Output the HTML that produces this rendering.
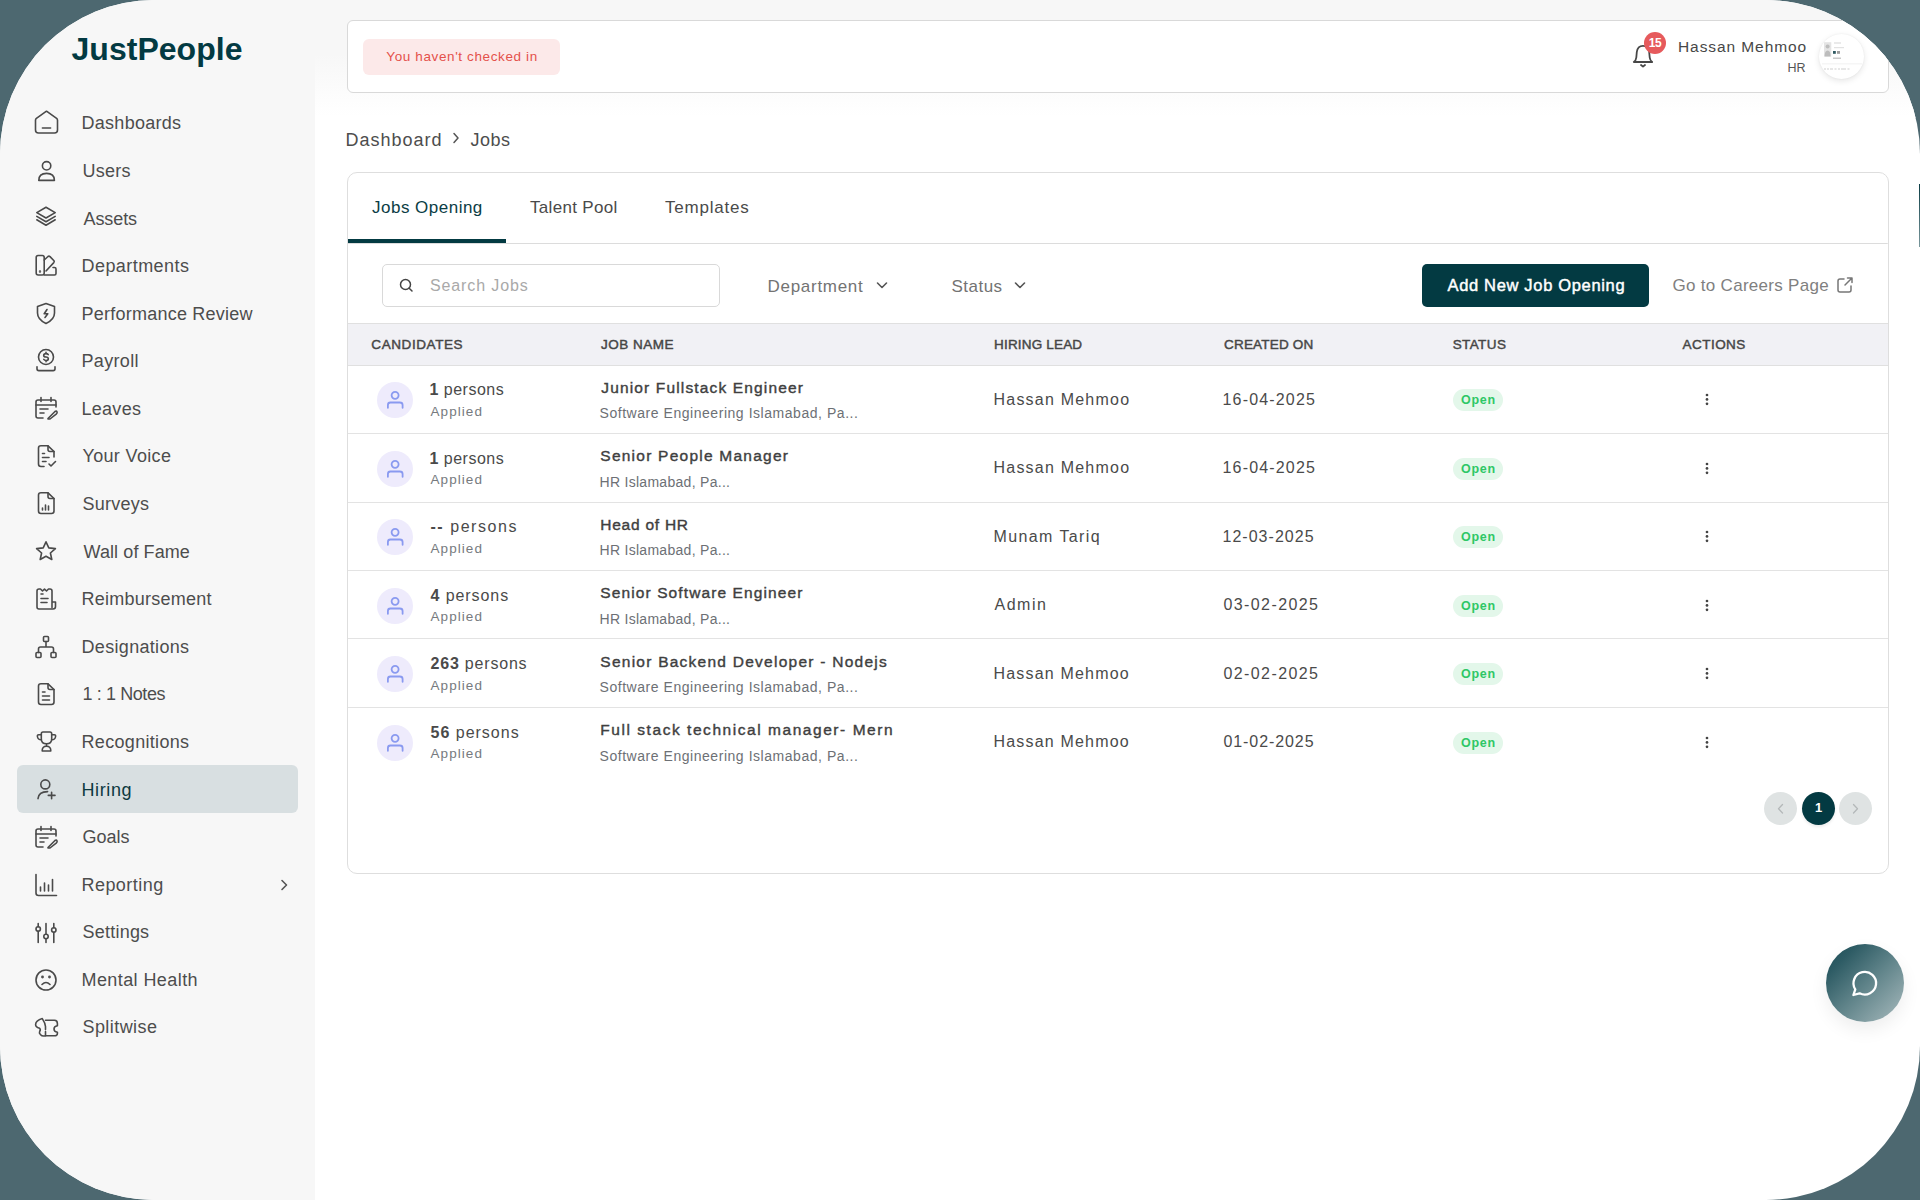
<!DOCTYPE html>
<html><head><meta charset="utf-8">
<style>
*{box-sizing:border-box;margin:0;padding:0}
html,body{width:1920px;height:1200px;overflow:hidden;background:#4d6870;font-family:"Liberation Sans",sans-serif}
#frame{position:absolute;left:0;top:0;width:1920px;height:1200px;border-radius:154px;overflow:hidden;background:#fff}
#frame div,#frame svg{position:absolute}
#side{left:0;top:0;width:315px;height:1200px;background:#f7f7f7}
.logo{left:71px;top:28px;font-size:33px;font-weight:bold;color:#033a42;letter-spacing:-0.3px;white-space:nowrap}
.ni{left:33px;width:26px;height:26px}
.nt{left:82px;font-size:18px;white-space:nowrap;line-height:22px}
.actbg{left:17px;top:765px;width:281px;height:48px;background:#d8dfe1;border-radius:6px}
#top{left:315px;top:0;width:1605px;height:118px;background:linear-gradient(#f7f7f7 0,#f7f7f7 54px,#fff 116px)}
.hcard{left:347px;top:20px;width:1542px;height:73px;background:#fff;border:1px solid #d9d9d9;border-radius:6px}
.pill{left:363px;top:39px;width:197px;height:36px;background:#fce9e9;border-radius:6px;color:#e4514b;font-size:14px;text-align:center;line-height:36px;white-space:nowrap}
.uname{left:1600px;width:206px;top:36px;font-size:16px;color:#444;text-align:right;white-space:nowrap}
.urole{left:1700px;width:106px;top:59px;font-size:14px;color:#555;text-align:right}
.badge{left:1644px;top:32px;width:22px;height:22px;border-radius:50%;background:#e65a5c;color:#fff;font-size:12px;font-weight:bold;text-align:center;line-height:22px;letter-spacing:-0.3px}
.avatar{left:1819px;top:34px;width:45px;height:45px;border-radius:50%;background:#fff;box-shadow:0 2px 6px rgba(0,0,0,0.10),0 0 2px rgba(0,0,0,0.06);overflow:hidden}
.crumb{top:128px;font-size:18px;color:#4a4a4a;white-space:nowrap}
.card{left:347px;top:172px;width:1542px;height:702px;border:1px solid #dedede;border-radius:10px;background:#fff}
.tab{top:196px;font-size:17px;color:#4a4a4a;white-space:nowrap}
.tabline{left:348px;top:239px;width:158px;height:4px;background:#033a42}
.tabsep{left:348px;top:243px;width:1540px;height:1px;background:#dcdcdc;border-radius:0 0 3px 0}
.search{left:382px;top:264px;width:338px;height:43px;border:1px solid #d9d9d9;border-radius:5px}
.ph{left:430px;top:275px;font-size:16px;color:#a8a8a8;white-space:nowrap}
.dd{top:276px;font-size:17px;color:#6a6a6a;white-space:nowrap}
.btn{left:1422px;top:264px;width:227px;height:43px;background:#033a42;border-radius:5px;color:#fff;font-size:16.5px;font-weight:bold;text-align:center;line-height:43px;white-space:nowrap}
.careers{left:1673px;top:275px;font-size:17px;color:#7d7d7d;white-space:nowrap}
.thead{left:348px;top:323px;width:1540px;height:43px;background:#f1f1f5;border-top:1px solid #e0e0e0;border-bottom:1px solid #e0e0e0}
.th{top:337px;font-size:13px;font-weight:bold;color:#454545;letter-spacing:0.9px;white-space:nowrap}
.rl{left:348px;width:1540px;height:1px;background:#e3e3e3}
.av{left:377px;width:36px;height:36px;border-radius:50%;background:#eeebfc}
.av svg{left:8px;top:8px;width:20px;height:20px}
.pc{left:430px;font-size:16px;color:#4a4a4a;white-space:nowrap}
.pc b{color:#333}
.ap{left:430px;font-size:14px;color:#777;white-space:nowrap}
.jn{left:600px;font-size:16px;font-weight:bold;color:#3a3a3a;white-space:nowrap}
.js{left:600px;font-size:13px;color:#6a6a6a;white-space:nowrap}
.hl{left:994px;font-size:16px;color:#4a4a4a;white-space:nowrap}
.dt{left:1223px;font-size:16px;color:#4a4a4a;white-space:nowrap}
.open{left:1453px;width:50px;height:22px;border-radius:11px;background:#e3f7ea;color:#2db55d;font-size:12.5px;font-weight:bold;text-align:center;line-height:22px}
.dots{left:1703.5px}
.pg{top:792px;width:33px;height:33px;border-radius:50%;text-align:center;line-height:32px;font-size:14px}
.chat{left:1826px;top:944px;width:78px;height:78px;border-radius:50%;background:linear-gradient(135deg,#1d4f58 0%,#2d5b64 20%,#5f8389 52%,#a9bbbe 100%);box-shadow:0 8px 18px rgba(0,0,0,0.07)}
.edge{left:1919px;top:184px;width:1px;height:63px;background:linear-gradient(#0b3d45,#7a979c)}
.tx{white-space:nowrap}
.tx b{font-weight:bold}
</style></head><body>
<div id="frame">
<div id="side">
  <div class="actbg"></div>
<svg class="ni" style="top:109.0px" viewBox="0 0 26 26" fill="none" stroke="#4a4a4a" stroke-width="1.6" stroke-linecap="round" stroke-linejoin="round"><path d="M13.5 2.2 L23.6 9.4 Q24.5 10.1 24.5 11.3 V21 A3 3 0 0 1 21.5 24 H5.5 A3 3 0 0 1 2.5 21 V11.3 Q2.5 10.1 3.4 9.4 Z"/><path d="M9.4 19 H17.6"/></svg>
<svg class="ni" style="top:156.7px" viewBox="0 0 26 26" fill="none" stroke="#4a4a4a" stroke-width="1.6" stroke-linecap="round" stroke-linejoin="round"><circle cx="13.6" cy="8.8" r="4.2"/><path d="M5.8 23.4 Q5.8 16.4 13.6 16.4 Q21.4 16.4 21.4 23.4 Z"/></svg>
<svg class="ni" style="top:204.4px" viewBox="0 0 26 26" fill="none" stroke="#4a4a4a" stroke-width="1.6" stroke-linecap="round" stroke-linejoin="round"><path d="M13 3.2 L22.2 8.6 L13 14 L3.8 8.6 Z"/><path d="M3.8 12.4 L13 17.8 L22.2 12.4"/><path d="M3.8 15.8 L13 21.2 L22.2 15.8"/></svg>
<svg class="ni" style="top:252.0px" viewBox="0 0 26 26" fill="none" stroke="#4a4a4a" stroke-width="1.6" stroke-linecap="round" stroke-linejoin="round"><rect x="3.2" y="3.5" width="8" height="19.5" rx="2"/><path d="M11.2 8 L15 4.5 Q16 3.8 17 4.6 L21 8.8 Q21.6 9.6 20.8 10.6 L13 19"/><path d="M11.2 23 H21.5 Q23 23 23 21.5 V17 Q23 15.5 21.5 15.5 L20 15.5"/><circle cx="7" cy="19.5" r="0.4" fill="#4a4a4a"/></svg>
<svg class="ni" style="top:299.7px" viewBox="0 0 26 26" fill="none" stroke="#4a4a4a" stroke-width="1.6" stroke-linecap="round" stroke-linejoin="round"><path d="M13 3.5 L21.5 6.5 V13 Q21.5 19.5 13 23.5 Q4.5 19.5 4.5 13 V6.5 Z"/><path d="M14 9.5 L11.2 13.8 H14.8 L12 17.5"/></svg>
<svg class="ni" style="top:347.4px" viewBox="0 0 26 26" fill="none" stroke="#4a4a4a" stroke-width="1.6" stroke-linecap="round" stroke-linejoin="round"><circle cx="13" cy="10" r="7.5"/><path d="M15.2 7.6 Q14.4 6.6 13 6.6 Q10.7 6.6 10.7 8.5 Q10.7 10 13 10 Q15.3 10 15.3 11.7 Q15.3 13.5 13 13.5 Q11.5 13.5 10.8 12.4 M13 5.3 V6.6 M13 13.5 V14.8"/><path d="M4 19.8 V21.8 Q4 23.6 5.8 23.6 H20.2 Q22 23.6 22 21.8 V19.8"/></svg>
<svg class="ni" style="top:395.1px" viewBox="0 0 26 26" fill="none" stroke="#4a4a4a" stroke-width="1.6" stroke-linecap="round" stroke-linejoin="round"><path d="M23 12 V7 Q23 5 21 5 H5 Q3 5 3 7 V21 Q3 23 5 23 H10"/><path d="M8 2.5 V6.5 M18 2.5 V6.5 M3 10 H23 M7 14 H15 M7 18 H11"/><path d="M15 23.5 L22 16.5 Q23.3 15.6 24 16.8 Q24.5 17.8 23.5 18.8 L17 24 H15 Z"/></svg>
<svg class="ni" style="top:442.8px" viewBox="0 0 26 26" fill="none" stroke="#4a4a4a" stroke-width="1.6" stroke-linecap="round" stroke-linejoin="round"><path d="M11 23.5 H8 Q5.5 23.5 5.5 21 V5 Q5.5 2.8 8 2.8 H15 L21 8.5 V14"/><path d="M15 2.8 V6.5 Q15 8.5 17 8.5 H21"/><path d="M9.5 10.5 H11.5 M9.5 14.5 H16 M9.5 18.5 H13"/><path d="M16 21 L18 23 L22.5 18.5"/></svg>
<svg class="ni" style="top:490.4px" viewBox="0 0 26 26" fill="none" stroke="#4a4a4a" stroke-width="1.6" stroke-linecap="round" stroke-linejoin="round"><path d="M15 2.8 H8 Q5.5 2.8 5.5 5 V21 Q5.5 23.5 8 23.5 H18.5 Q21 23.5 21 21 V8.5 Z"/><path d="M15 2.8 V6.5 Q15 8.5 17 8.5 H21"/><path d="M9.5 20 V18 M12.5 20 V15 M15.5 20 V16"/></svg>
<svg class="ni" style="top:538.1px" viewBox="0 0 26 26" fill="none" stroke="#4a4a4a" stroke-width="1.6" stroke-linecap="round" stroke-linejoin="round"><path d="M13 3.8 L15.8 9.9 L22.4 10.6 L17.4 15 L18.8 21.5 L13 18.2 L7.2 21.5 L8.6 15 L3.6 10.6 L10.2 9.9 Z"/></svg>
<svg class="ni" style="top:585.8px" viewBox="0 0 26 26" fill="none" stroke="#4a4a4a" stroke-width="1.6" stroke-linecap="round" stroke-linejoin="round"><path d="M19 21.5 V5 Q19 3 17 3 L15.5 3 L13.5 5 L11.5 3 L9.5 5 L7.5 3 H6 Q4 3 4 5 V21 Q4 23 6 23 H20 Q22.5 23 22.5 20.5 V16 H19"/><path d="M8 8 H10 M8 12.5 H15 M8 16.5 H14"/></svg>
<svg class="ni" style="top:633.5px" viewBox="0 0 26 26" fill="none" stroke="#4a4a4a" stroke-width="1.6" stroke-linecap="round" stroke-linejoin="round"><rect x="10.5" y="2.5" width="5" height="5" rx="1"/><rect x="3" y="18.5" width="5" height="5" rx="1"/><rect x="18" y="18.5" width="5" height="5" rx="1"/><path d="M13 7.5 V13 M5.5 18.5 V15 Q5.5 13 7.5 13 H18.5 Q20.5 13 20.5 15 V18.5"/></svg>
<svg class="ni" style="top:681.2px" viewBox="0 0 26 26" fill="none" stroke="#4a4a4a" stroke-width="1.6" stroke-linecap="round" stroke-linejoin="round"><path d="M15 2.8 H8 Q5.5 2.8 5.5 5 V21 Q5.5 23.5 8 23.5 H18.5 Q21 23.5 21 21 V8.5 Z"/><path d="M15 2.8 V6.5 Q15 8.5 17 8.5 H21"/><path d="M9.5 11 H12 M9.5 15 H16.5 M9.5 19 H16.5"/></svg>
<svg class="ni" style="top:728.8px" viewBox="0 0 26 26" fill="none" stroke="#4a4a4a" stroke-width="1.6" stroke-linecap="round" stroke-linejoin="round"><path d="M10 3 H17 Q18.7 3 18.7 4.7 V10 Q18.7 14.8 13.5 14.8 Q8.3 14.8 8.3 10 V4.7 Q8.3 3 10 3 Z"/><path d="M8.3 5.8 H5.6 Q4.2 5.8 4.4 7.5 Q4.9 10.8 8.3 10.8 M18.7 5.8 H21.4 Q22.8 5.8 22.6 7.5 Q22.1 10.8 18.7 10.8"/><path d="M13.5 14.8 V17.3"/><path d="M9.2 22 Q9 17.3 13.5 17.3 Q18 17.3 17.8 22 Z"/></svg>
<svg class="ni" style="top:776.5px" viewBox="0 0 26 26" fill="none" stroke="#4a4a4a" stroke-width="1.6" stroke-linecap="round" stroke-linejoin="round"><circle cx="12.3" cy="7.4" r="4.5"/><path d="M5 21.6 Q5.6 14.7 14.6 14.6"/><path d="M18.6 15.2 V21.7 M15.3 18.4 H22"/></svg>
<svg class="ni" style="top:824.2px" viewBox="0 0 26 26" fill="none" stroke="#4a4a4a" stroke-width="1.6" stroke-linecap="round" stroke-linejoin="round"><path d="M23 12 V7 Q23 5 21 5 H5 Q3 5 3 7 V21 Q3 23 5 23 H10"/><path d="M8 2.5 V6.5 M18 2.5 V6.5 M3 10 H23 M7 14 H15 M7 18 H11"/><path d="M15 23.5 L22 16.5 Q23.3 15.6 24 16.8 Q24.5 17.8 23.5 18.8 L17 24 H15 Z"/></svg>
<svg class="ni" style="top:871.9px" viewBox="0 0 26 26" fill="none" stroke="#4a4a4a" stroke-width="1.6" stroke-linecap="round" stroke-linejoin="round"><path d="M3 2.5 V21 Q3 23.5 5.5 23.5 H23.5"/><path d="M7.5 19 V15 M11.5 19 V11 M15.5 19 V13 M19.5 19 V7.5"/></svg>
<svg class="ni" style="top:919.6px" viewBox="0 0 26 26" fill="none" stroke="#4a4a4a" stroke-width="1.6" stroke-linecap="round" stroke-linejoin="round"><circle cx="5.2" cy="9" r="2.2"/><circle cx="13" cy="16.5" r="2.2"/><circle cx="20.8" cy="10" r="2.2"/><path d="M5.2 3.5 V6.8 M5.2 11.2 V22.5 M13 3.5 V14.3 M13 18.7 V22.5 M20.8 3.5 V7.8 M20.8 12.2 V22.5"/></svg>
<svg class="ni" style="top:967.2px" viewBox="0 0 26 26" fill="none" stroke="#4a4a4a" stroke-width="1.6" stroke-linecap="round" stroke-linejoin="round"><circle cx="13" cy="13" r="10"/><path d="M9 17.5 Q13 13.5 17 17.5"/><circle cx="9.5" cy="10" r="0.6" fill="#4a4a4a"/><circle cx="16.5" cy="10" r="0.6" fill="#4a4a4a"/></svg>
<svg class="ni" style="top:1014.9px" viewBox="0 0 26 26" fill="none" stroke="#4a4a4a" stroke-width="1.6" stroke-linecap="round" stroke-linejoin="round"><path d="M12.5 5.2 H21.5 Q24.4 5.2 24.4 8.5 V10.8 Q21 11.3 21 14 Q21 16.8 24.4 17.3 V18.5 Q24.4 20.8 21.5 20.8 H12.5"/><path d="M12.5 20.8 Q9.2 21.6 7.6 19.8 Q5.8 17.8 6.6 16.6 Q8 14.8 6.6 13.3 Q2.5 12 2.6 9.5 Q2.8 5.5 9.3 3.6 Q12.2 8 12.5 11.5 V14.6 M12.5 16.6 V20.8"/></svg>
<svg style="position:absolute;left:278px;top:878px" width="12" height="14" viewBox="0 0 12 14" fill="none" stroke="#555" stroke-width="1.6" stroke-linecap="round" stroke-linejoin="round"><path d="M4 2.5 L8.5 7 L4 11.5"/></svg>
</div>
<div id="top"></div>
<div class="hcard"></div>
<div class="pill"></div>
<svg style="left:1630px;top:42px" width="26" height="28" viewBox="0 0 26 28" fill="none" stroke="#474747" stroke-width="1.8" stroke-linecap="round" stroke-linejoin="round"><path d="M13 3.8 Q7.6 3.8 6.8 10 L6.3 15.5 Q6 18.5 3.8 20 H22.2 Q20 18.5 19.7 15.5 L19.2 10 Q18.4 3.8 13 3.8 Z"/><path d="M11 23 L13 24.6 L15 23"/></svg>
<div class="badge">15</div>
<div class="avatar"><svg style="left:0;top:0" width="45" height="45" viewBox="0 0 45 45">
<rect x="5" y="8.2" width="7.3" height="14.3" fill="#e4e4e4"/><circle cx="8.6" cy="12.5" r="2" fill="#bdbdbd"/><path d="M5.6 22.5 Q5.6 16.5 8.6 16.5 Q11.6 16.5 11.6 22.5 Z" fill="#bdbdbd"/>
<rect x="14" y="17" width="2.8" height="2.8" fill="#2f5a61"/><rect x="18" y="17" width="3" height="2.8" fill="#9c9c9c"/>
<rect x="15" y="8.5" width="7" height="1" fill="#d5d5d5"/><rect x="15" y="13" width="10" height="1.2" fill="#e2e2e2"/><rect x="14" y="23.5" width="8" height="1.5" fill="#c9c9c9"/>
<rect x="3" y="29.5" width="40" height="0.8" fill="#eeeeee"/>
<path d="M5 35 h2 M8 35 h2 M11 35 h3 M15.5 35 h2 M19 35 h2 M22 35 h5 M28.5 35 h2" stroke="#cfcfcf" stroke-width="1"/>
</svg></div>
<svg style="left:450px;top:131px" width="12" height="14" viewBox="0 0 12 14" fill="none" stroke="#555" stroke-width="1.5" stroke-linecap="round" stroke-linejoin="round"><path d="M4 2.5 L8 7 L4 11.5"/></svg>
<div class="card"></div>
<div class="tabsep"></div>
<div class="tabline"></div>
<div class="search"></div>
<svg style="left:398px;top:277px" width="16" height="16" viewBox="0 0 16 16" fill="none" stroke="#444" stroke-width="1.5" stroke-linecap="round"><circle cx="7.5" cy="7.5" r="5"/><path d="M11.2 11.2 L14 14"/></svg>
<svg style="left:875px;top:278px" width="14" height="14" viewBox="0 0 14 14" fill="none" stroke="#555" stroke-width="1.6" stroke-linecap="round" stroke-linejoin="round"><path d="M2.5 5 L7 9.5 L11.5 5"/></svg>
<svg style="left:1013px;top:278px" width="14" height="14" viewBox="0 0 14 14" fill="none" stroke="#555" stroke-width="1.6" stroke-linecap="round" stroke-linejoin="round"><path d="M2.5 5 L7 9.5 L11.5 5"/></svg>
<div class="btn"></div>
<svg style="left:1835px;top:275px" width="20" height="20" viewBox="0 0 20 20" fill="none" stroke="#777" stroke-width="1.5" stroke-linecap="round" stroke-linejoin="round"><path d="M9 4 H5 Q3 4 3 6 V15 Q3 17 5 17 H14 Q16 17 16 15 V11"/><path d="M10 10 L17 3 M12.5 3 H17 V7.5"/></svg>
<div class="thead"></div>
<div class="rl" style="top:433px"></div>
<div class="av" style="top:382.0px"><svg viewBox="0 0 20 20" fill="none" stroke="#8a9af0" stroke-width="1.8" stroke-linecap="round" stroke-linejoin="round"><circle cx="10.1" cy="5.3" r="3.5"/><path d="M2.9 17.8 V15 Q2.9 12.5 5.4 12.5 H14.9 Q17.6 12.5 17.6 15 V17.8"/></svg></div>
<div class="open" style="top:389.0px"></div>
<svg class="dots" style="top:392.0px" width="6" height="16" viewBox="0 0 6 16" fill="#444"><circle cx="3" cy="3" r="1.35"/><circle cx="3" cy="7.4" r="1.35"/><circle cx="3" cy="11.8" r="1.35"/></svg>
<div class="rl" style="top:502px"></div>
<div class="av" style="top:450.5px"><svg viewBox="0 0 20 20" fill="none" stroke="#8a9af0" stroke-width="1.8" stroke-linecap="round" stroke-linejoin="round"><circle cx="10.1" cy="5.3" r="3.5"/><path d="M2.9 17.8 V15 Q2.9 12.5 5.4 12.5 H14.9 Q17.6 12.5 17.6 15 V17.8"/></svg></div>
<div class="open" style="top:457.5px"></div>
<svg class="dots" style="top:460.5px" width="6" height="16" viewBox="0 0 6 16" fill="#444"><circle cx="3" cy="3" r="1.35"/><circle cx="3" cy="7.4" r="1.35"/><circle cx="3" cy="11.8" r="1.35"/></svg>
<div class="rl" style="top:570px"></div>
<div class="av" style="top:519.0px"><svg viewBox="0 0 20 20" fill="none" stroke="#8a9af0" stroke-width="1.8" stroke-linecap="round" stroke-linejoin="round"><circle cx="10.1" cy="5.3" r="3.5"/><path d="M2.9 17.8 V15 Q2.9 12.5 5.4 12.5 H14.9 Q17.6 12.5 17.6 15 V17.8"/></svg></div>
<div class="open" style="top:526.0px"></div>
<svg class="dots" style="top:529.0px" width="6" height="16" viewBox="0 0 6 16" fill="#444"><circle cx="3" cy="3" r="1.35"/><circle cx="3" cy="7.4" r="1.35"/><circle cx="3" cy="11.8" r="1.35"/></svg>
<div class="rl" style="top:638px"></div>
<div class="av" style="top:587.5px"><svg viewBox="0 0 20 20" fill="none" stroke="#8a9af0" stroke-width="1.8" stroke-linecap="round" stroke-linejoin="round"><circle cx="10.1" cy="5.3" r="3.5"/><path d="M2.9 17.8 V15 Q2.9 12.5 5.4 12.5 H14.9 Q17.6 12.5 17.6 15 V17.8"/></svg></div>
<div class="open" style="top:594.5px"></div>
<svg class="dots" style="top:597.5px" width="6" height="16" viewBox="0 0 6 16" fill="#444"><circle cx="3" cy="3" r="1.35"/><circle cx="3" cy="7.4" r="1.35"/><circle cx="3" cy="11.8" r="1.35"/></svg>
<div class="rl" style="top:707px"></div>
<div class="av" style="top:656.0px"><svg viewBox="0 0 20 20" fill="none" stroke="#8a9af0" stroke-width="1.8" stroke-linecap="round" stroke-linejoin="round"><circle cx="10.1" cy="5.3" r="3.5"/><path d="M2.9 17.8 V15 Q2.9 12.5 5.4 12.5 H14.9 Q17.6 12.5 17.6 15 V17.8"/></svg></div>
<div class="open" style="top:663.0px"></div>
<svg class="dots" style="top:666.0px" width="6" height="16" viewBox="0 0 6 16" fill="#444"><circle cx="3" cy="3" r="1.35"/><circle cx="3" cy="7.4" r="1.35"/><circle cx="3" cy="11.8" r="1.35"/></svg>

<div class="av" style="top:724.5px"><svg viewBox="0 0 20 20" fill="none" stroke="#8a9af0" stroke-width="1.8" stroke-linecap="round" stroke-linejoin="round"><circle cx="10.1" cy="5.3" r="3.5"/><path d="M2.9 17.8 V15 Q2.9 12.5 5.4 12.5 H14.9 Q17.6 12.5 17.6 15 V17.8"/></svg></div>
<div class="open" style="top:731.5px"></div>
<svg class="dots" style="top:734.5px" width="6" height="16" viewBox="0 0 6 16" fill="#444"><circle cx="3" cy="3" r="1.35"/><circle cx="3" cy="7.4" r="1.35"/><circle cx="3" cy="11.8" r="1.35"/></svg>
<div class="pg" style="left:1764px;background:#dfe3e3"><svg style="left:0;top:0" width="33" height="33" viewBox="0 0 33 33" fill="none" stroke="#b4b8b9" stroke-width="1.3" stroke-linecap="round" stroke-linejoin="round"><path d="M18.5 12.5 L14.5 16.8 L18.5 21"/></svg></div>
<div class="pg" style="left:1802px;background:#033a42;color:#fff;font-weight:bold;font-size:13px;line-height:31px;box-shadow:0 2px 3px rgba(0,0,0,0.08)">1</div>
<div class="pg" style="left:1839px;background:#dfe3e3"><svg style="left:0;top:0" width="33" height="33" viewBox="0 0 33 33" fill="none" stroke="#b4b8b9" stroke-width="1.3" stroke-linecap="round" stroke-linejoin="round"><path d="M14.5 12.5 L18.5 16.8 L14.5 21"/></svg></div>
<div class="chat"><svg style="left:24px;top:24px" width="30" height="30" viewBox="0 0 30 30" fill="none" stroke="#fff" stroke-width="2.3" stroke-linecap="round" stroke-linejoin="round"><path d="M3.4 27 L5.3 21.4 A11.3 11.3 0 1 1 9.6 25.3 Z"/></svg></div>
<div class="edge"></div>
<div id="t_nav0" class="tx" style="left:81.50px;top:113.40px;font-size:18px;line-height:20px;letter-spacing:0.284px;color:#4d4d4d;font-weight:normal;">Dashboards</div>
<div id="t_nav1" class="tx" style="left:82.50px;top:160.98px;font-size:18px;line-height:20px;letter-spacing:0.250px;color:#4d4d4d;font-weight:normal;">Users</div>
<div id="t_nav2" class="tx" style="left:83.50px;top:208.56px;font-size:18px;line-height:20px;letter-spacing:-0.080px;color:#4d4d4d;font-weight:normal;">Assets</div>
<div id="t_nav3" class="tx" style="left:81.50px;top:256.14px;font-size:18px;line-height:20px;letter-spacing:0.440px;color:#4d4d4d;font-weight:normal;">Departments</div>
<div id="t_nav4" class="tx" style="left:81.50px;top:303.72px;font-size:18px;line-height:20px;letter-spacing:0.235px;color:#4d4d4d;font-weight:normal;">Performance Review</div>
<div id="t_nav5" class="tx" style="left:81.50px;top:351.30px;font-size:18px;line-height:20px;letter-spacing:0.333px;color:#4d4d4d;font-weight:normal;">Payroll</div>
<div id="t_nav6" class="tx" style="left:81.50px;top:398.88px;font-size:18px;line-height:20px;letter-spacing:0.280px;color:#4d4d4d;font-weight:normal;">Leaves</div>
<div id="t_nav7" class="tx" style="left:82.50px;top:446.46px;font-size:18px;line-height:20px;letter-spacing:0.333px;color:#4d4d4d;font-weight:normal;">Your Voice</div>
<div id="t_nav8" class="tx" style="left:82.50px;top:494.04px;font-size:18px;line-height:20px;letter-spacing:0.231px;color:#4d4d4d;font-weight:normal;">Surveys</div>
<div id="t_nav9" class="tx" style="left:83.50px;top:541.62px;font-size:18px;line-height:20px;letter-spacing:0.091px;color:#4d4d4d;font-weight:normal;">Wall of Fame</div>
<div id="t_nav10" class="tx" style="left:81.50px;top:589.20px;font-size:18px;line-height:20px;letter-spacing:0.250px;color:#4d4d4d;font-weight:normal;">Reimbursement</div>
<div id="t_nav11" class="tx" style="left:81.50px;top:636.78px;font-size:18px;line-height:20px;letter-spacing:0.322px;color:#4d4d4d;font-weight:normal;">Designations</div>
<div id="t_nav12" class="tx" style="left:82.50px;top:684.36px;font-size:18px;line-height:20px;letter-spacing:-0.400px;color:#4d4d4d;font-weight:normal;">1 : 1 Notes</div>
<div id="t_nav13" class="tx" style="left:81.50px;top:731.94px;font-size:18px;line-height:20px;letter-spacing:0.322px;color:#4d4d4d;font-weight:normal;">Recognitions</div>
<div id="t_nav14" class="tx" style="left:81.50px;top:779.52px;font-size:18px;line-height:20px;letter-spacing:0.600px;color:#0d3940;font-weight:normal;">Hiring</div>
<div id="t_nav15" class="tx" style="left:82.50px;top:827.10px;font-size:18px;line-height:20px;letter-spacing:0.000px;color:#4d4d4d;font-weight:normal;">Goals</div>
<div id="t_nav16" class="tx" style="left:81.50px;top:874.68px;font-size:18px;line-height:20px;letter-spacing:0.450px;color:#4d4d4d;font-weight:normal;">Reporting</div>
<div id="t_nav17" class="tx" style="left:82.50px;top:922.26px;font-size:18px;line-height:20px;letter-spacing:0.226px;color:#4d4d4d;font-weight:normal;">Settings</div>
<div id="t_nav18" class="tx" style="left:81.50px;top:969.84px;font-size:18px;line-height:20px;letter-spacing:0.417px;color:#4d4d4d;font-weight:normal;">Mental Health</div>
<div id="t_nav19" class="tx" style="left:82.50px;top:1017.42px;font-size:18px;line-height:20px;letter-spacing:0.425px;color:#4d4d4d;font-weight:normal;">Splitwise</div>
<div id="t_logo" class="tx" style="left:71.50px;top:30.80px;font-size:32px;line-height:36px;letter-spacing:0.025px;color:#033a42;font-weight:bold;">JustPeople</div>
<div id="t_pill" class="tx" style="left:386.25px;top:48.60px;font-size:13.5px;line-height:15px;letter-spacing:0.621px;color:#e4514b;font-weight:normal;">You haven't checked in</div>
<div id="t_uname" class="tx" style="left:1678.00px;top:37.70px;font-size:15.5px;line-height:17px;letter-spacing:0.917px;color:#474747;font-weight:normal;">Hassan Mehmoo</div>
<div id="t_urole" class="tx" style="left:1787.50px;top:60.70px;font-size:12.5px;line-height:14px;letter-spacing:0.000px;color:#555;font-weight:normal;">HR</div>
<div id="t_cr1" class="tx" style="left:345.50px;top:129.60px;font-size:18px;line-height:20px;letter-spacing:1.000px;color:#4d4d4d;font-weight:normal;">Dashboard</div>
<div id="t_cr2" class="tx" style="left:470.50px;top:129.60px;font-size:18px;line-height:20px;letter-spacing:0.531px;color:#4d4d4d;font-weight:normal;">Jobs</div>
<div id="t_tab1" class="tx" style="left:372.00px;top:197.50px;font-size:17px;line-height:19px;letter-spacing:0.490px;color:#0b3d45;font-weight:normal;">Jobs Opening</div>
<div id="t_tab2" class="tx" style="left:530.00px;top:197.50px;font-size:17px;line-height:19px;letter-spacing:0.320px;color:#4a4a4a;font-weight:normal;">Talent Pool</div>
<div id="t_tab3" class="tx" style="left:665.00px;top:197.50px;font-size:17px;line-height:19px;letter-spacing:0.775px;color:#4a4a4a;font-weight:normal;">Templates</div>
<div id="t_ph" class="tx" style="left:430.00px;top:276.70px;font-size:16px;line-height:17px;letter-spacing:0.880px;color:#a9a9a9;font-weight:normal;">Search Jobs</div>
<div id="t_dd1" class="tx" style="left:767.50px;top:276.70px;font-size:17px;line-height:19px;letter-spacing:0.716px;color:#737373;font-weight:normal;">Department</div>
<div id="t_dd2" class="tx" style="left:951.50px;top:276.70px;font-size:17px;line-height:19px;letter-spacing:0.480px;color:#737373;font-weight:normal;">Status</div>
<div id="t_btn" class="tx" style="left:1447.50px;top:275.90px;font-size:16.5px;line-height:18px;letter-spacing:0.667px;color:#ffffff;font-weight:normal;-webkit-text-stroke:0.45px #ffffff">Add New Job Opening</div>
<div id="t_car" class="tx" style="left:1672.50px;top:275.50px;font-size:17px;line-height:19px;letter-spacing:0.294px;color:#808080;font-weight:normal;">Go to Careers Page</div>
<div id="t_th0" class="tx" style="left:371.30px;top:336.90px;font-size:13.5px;line-height:15px;letter-spacing:0.582px;color:#464646;font-weight:normal;-webkit-text-stroke:0.45px #464646">CANDIDATES</div>
<div id="t_th1" class="tx" style="left:600.90px;top:336.90px;font-size:13.5px;line-height:15px;letter-spacing:0.498px;color:#464646;font-weight:normal;-webkit-text-stroke:0.45px #464646">JOB NAME</div>
<div id="t_th2" class="tx" style="left:994.10px;top:336.90px;font-size:13.5px;line-height:15px;letter-spacing:0.170px;color:#464646;font-weight:normal;-webkit-text-stroke:0.45px #464646">HIRING LEAD</div>
<div id="t_th3" class="tx" style="left:1224.00px;top:336.90px;font-size:13.5px;line-height:15px;letter-spacing:0.190px;color:#464646;font-weight:normal;-webkit-text-stroke:0.45px #464646">CREATED ON</div>
<div id="t_th4" class="tx" style="left:1452.70px;top:336.90px;font-size:13.5px;line-height:15px;letter-spacing:0.390px;color:#464646;font-weight:normal;-webkit-text-stroke:0.45px #464646">STATUS</div>
<div id="t_th5" class="tx" style="left:1682.50px;top:336.90px;font-size:13.5px;line-height:15px;letter-spacing:0.470px;color:#464646;font-weight:normal;-webkit-text-stroke:0.45px #464646">ACTIONS</div>
<div id="t_pc0" class="tx" style="left:429.50px;top:381.00px;font-size:16px;line-height:17px;letter-spacing:0.491px;color:#4a4a4a;font-weight:normal;"><b>1</b> persons</div>
<div id="t_ap0" class="tx" style="left:430.50px;top:403.80px;font-size:13.5px;line-height:15px;letter-spacing:1.068px;color:#767a7e;font-weight:normal;">Applied</div>
<div id="t_jn0" class="tx" style="left:601.30px;top:378.70px;font-size:15.5px;line-height:17px;letter-spacing:1.147px;color:#3f3f3f;font-weight:normal;-webkit-text-stroke:0.4px #3f3f3f">Junior Fullstack Engineer</div>
<div id="t_js0" class="tx" style="left:599.50px;top:405.10px;font-size:14px;line-height:16px;letter-spacing:0.542px;color:#6d7075;font-weight:normal;">Software Engineering Islamabad, Pa...</div>
<div id="t_hl0" class="tx" style="left:993.50px;top:390.80px;font-size:16px;line-height:17px;letter-spacing:1.216px;color:#4a4a4a;font-weight:normal;">Hassan Mehmoo</div>
<div id="t_dt0" class="tx" style="left:1222.50px;top:390.80px;font-size:16px;line-height:17px;letter-spacing:1.175px;color:#4a4a4a;font-weight:normal;">16-04-2025</div>
<div id="t_op0" class="tx" style="left:1461.00px;top:393.30px;font-size:12.5px;line-height:14px;letter-spacing:0.735px;color:#2ec766;font-weight:bold;">Open</div>
<div id="t_pc1" class="tx" style="left:429.50px;top:449.50px;font-size:16px;line-height:17px;letter-spacing:0.491px;color:#4a4a4a;font-weight:normal;"><b>1</b> persons</div>
<div id="t_ap1" class="tx" style="left:430.50px;top:472.30px;font-size:13.5px;line-height:15px;letter-spacing:1.068px;color:#767a7e;font-weight:normal;">Applied</div>
<div id="t_jn1" class="tx" style="left:600.30px;top:447.20px;font-size:15.5px;line-height:17px;letter-spacing:1.240px;color:#3f3f3f;font-weight:normal;-webkit-text-stroke:0.4px #3f3f3f">Senior People Manager</div>
<div id="t_js1" class="tx" style="left:599.50px;top:473.60px;font-size:14px;line-height:16px;letter-spacing:0.289px;color:#6d7075;font-weight:normal;">HR Islamabad, Pa...</div>
<div id="t_hl1" class="tx" style="left:993.50px;top:459.30px;font-size:16px;line-height:17px;letter-spacing:1.216px;color:#4a4a4a;font-weight:normal;">Hassan Mehmoo</div>
<div id="t_dt1" class="tx" style="left:1222.50px;top:459.30px;font-size:16px;line-height:17px;letter-spacing:1.175px;color:#4a4a4a;font-weight:normal;">16-04-2025</div>
<div id="t_op1" class="tx" style="left:1461.00px;top:461.80px;font-size:12.5px;line-height:14px;letter-spacing:0.735px;color:#2ec766;font-weight:bold;">Open</div>
<div id="t_pc2" class="tx" style="left:430.50px;top:518.00px;font-size:16px;line-height:17px;letter-spacing:1.541px;color:#4a4a4a;font-weight:normal;"><b>--</b> persons</div>
<div id="t_ap2" class="tx" style="left:430.50px;top:540.80px;font-size:13.5px;line-height:15px;letter-spacing:1.068px;color:#767a7e;font-weight:normal;">Applied</div>
<div id="t_jn2" class="tx" style="left:600.30px;top:515.70px;font-size:15.5px;line-height:17px;letter-spacing:0.751px;color:#3f3f3f;font-weight:normal;-webkit-text-stroke:0.4px #3f3f3f">Head of HR</div>
<div id="t_js2" class="tx" style="left:599.50px;top:542.10px;font-size:14px;line-height:16px;letter-spacing:0.289px;color:#6d7075;font-weight:normal;">HR Islamabad, Pa...</div>
<div id="t_hl2" class="tx" style="left:993.50px;top:527.80px;font-size:16px;line-height:17px;letter-spacing:1.400px;color:#4a4a4a;font-weight:normal;">Munam Tariq</div>
<div id="t_dt2" class="tx" style="left:1222.50px;top:527.80px;font-size:16px;line-height:17px;letter-spacing:1.025px;color:#4a4a4a;font-weight:normal;">12-03-2025</div>
<div id="t_op2" class="tx" style="left:1461.00px;top:530.30px;font-size:12.5px;line-height:14px;letter-spacing:0.735px;color:#2ec766;font-weight:bold;">Open</div>
<div id="t_pc3" class="tx" style="left:430.50px;top:586.50px;font-size:16px;line-height:17px;letter-spacing:0.925px;color:#4a4a4a;font-weight:normal;"><b>4</b> persons</div>
<div id="t_ap3" class="tx" style="left:430.50px;top:609.30px;font-size:13.5px;line-height:15px;letter-spacing:1.068px;color:#767a7e;font-weight:normal;">Applied</div>
<div id="t_jn3" class="tx" style="left:600.30px;top:584.20px;font-size:15.5px;line-height:17px;letter-spacing:1.105px;color:#3f3f3f;font-weight:normal;-webkit-text-stroke:0.4px #3f3f3f">Senior Software Engineer</div>
<div id="t_js3" class="tx" style="left:599.50px;top:610.60px;font-size:14px;line-height:16px;letter-spacing:0.289px;color:#6d7075;font-weight:normal;">HR Islamabad, Pa...</div>
<div id="t_hl3" class="tx" style="left:994.50px;top:596.30px;font-size:16px;line-height:17px;letter-spacing:1.500px;color:#4a4a4a;font-weight:normal;">Admin</div>
<div id="t_dt3" class="tx" style="left:1223.50px;top:596.30px;font-size:16px;line-height:17px;letter-spacing:1.397px;color:#4a4a4a;font-weight:normal;">03-02-2025</div>
<div id="t_op3" class="tx" style="left:1461.00px;top:598.80px;font-size:12.5px;line-height:14px;letter-spacing:0.735px;color:#2ec766;font-weight:bold;">Open</div>
<div id="t_pc4" class="tx" style="left:430.50px;top:655.00px;font-size:16px;line-height:17px;letter-spacing:0.800px;color:#4a4a4a;font-weight:normal;"><b>263</b> persons</div>
<div id="t_ap4" class="tx" style="left:430.50px;top:677.80px;font-size:13.5px;line-height:15px;letter-spacing:1.068px;color:#767a7e;font-weight:normal;">Applied</div>
<div id="t_jn4" class="tx" style="left:600.30px;top:652.70px;font-size:15.5px;line-height:17px;letter-spacing:1.250px;color:#3f3f3f;font-weight:normal;-webkit-text-stroke:0.4px #3f3f3f">Senior Backend Developer - Nodejs</div>
<div id="t_js4" class="tx" style="left:599.50px;top:679.10px;font-size:14px;line-height:16px;letter-spacing:0.542px;color:#6d7075;font-weight:normal;">Software Engineering Islamabad, Pa...</div>
<div id="t_hl4" class="tx" style="left:993.50px;top:664.80px;font-size:16px;line-height:17px;letter-spacing:1.185px;color:#4a4a4a;font-weight:normal;">Hassan Mehmoo</div>
<div id="t_dt4" class="tx" style="left:1223.50px;top:664.80px;font-size:16px;line-height:17px;letter-spacing:1.397px;color:#4a4a4a;font-weight:normal;">02-02-2025</div>
<div id="t_op4" class="tx" style="left:1461.00px;top:667.30px;font-size:12.5px;line-height:14px;letter-spacing:0.735px;color:#2ec766;font-weight:bold;">Open</div>
<div id="t_pc5" class="tx" style="left:430.50px;top:723.50px;font-size:16px;line-height:17px;letter-spacing:1.000px;color:#4a4a4a;font-weight:normal;"><b>56</b> persons</div>
<div id="t_ap5" class="tx" style="left:430.50px;top:746.30px;font-size:13.5px;line-height:15px;letter-spacing:1.068px;color:#767a7e;font-weight:normal;">Applied</div>
<div id="t_jn5" class="tx" style="left:600.30px;top:721.20px;font-size:15.5px;line-height:17px;letter-spacing:1.548px;color:#3f3f3f;font-weight:normal;-webkit-text-stroke:0.4px #3f3f3f">Full stack technical manager- Mern</div>
<div id="t_js5" class="tx" style="left:599.50px;top:747.60px;font-size:14px;line-height:16px;letter-spacing:0.542px;color:#6d7075;font-weight:normal;">Software Engineering Islamabad, Pa...</div>
<div id="t_hl5" class="tx" style="left:993.50px;top:733.30px;font-size:16px;line-height:17px;letter-spacing:1.185px;color:#4a4a4a;font-weight:normal;">Hassan Mehmoo</div>
<div id="t_dt5" class="tx" style="left:1223.50px;top:733.30px;font-size:16px;line-height:17px;letter-spacing:0.914px;color:#4a4a4a;font-weight:normal;">01-02-2025</div>
<div id="t_op5" class="tx" style="left:1461.00px;top:735.80px;font-size:12.5px;line-height:14px;letter-spacing:0.735px;color:#2ec766;font-weight:bold;">Open</div>
</div>
</body></html>
